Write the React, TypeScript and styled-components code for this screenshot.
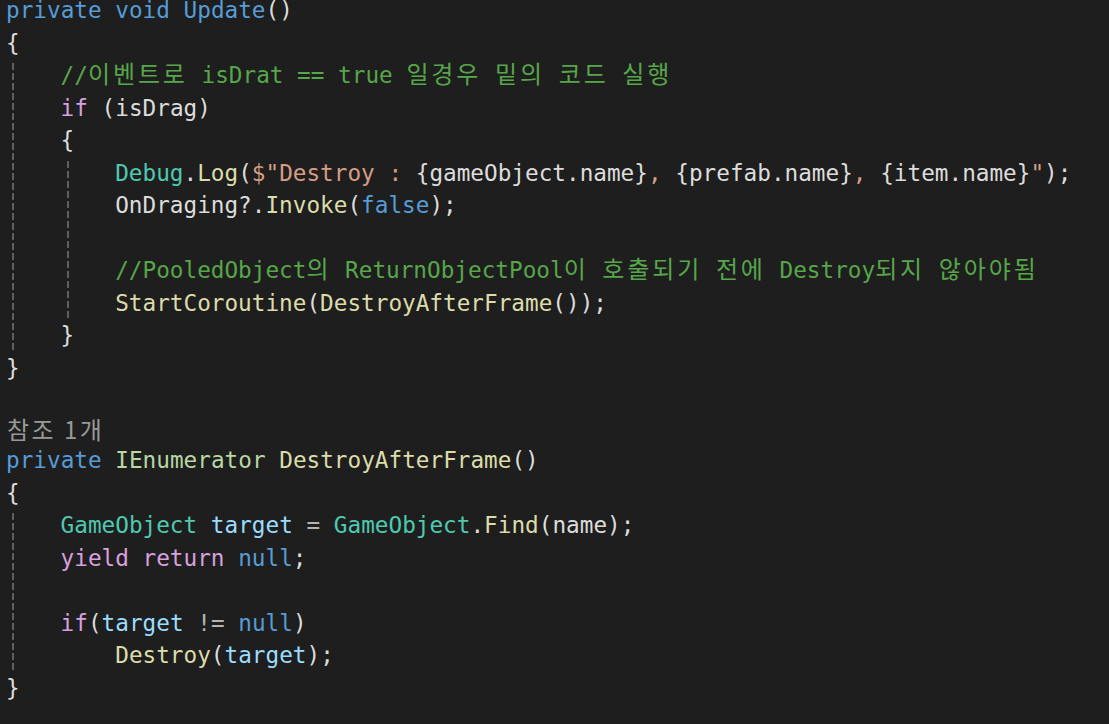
import React from "react";
import styled, { createGlobalStyle } from "styled-components";

const Global = createGlobalStyle`
  html, body { margin: 0; padding: 0; background: #1e1e1e; }
  #root { min-height: 100vh; }
`;

const COLORS = {
  kw: "#569cd6",
  ctl: "#d8a0df",
  cm: "#57a64a",
  ty: "#4ec9b0",
  fn: "#dcdcaa",
  str: "#d69d85",
  tx: "#dcdcdc",
  loc: "#9cdcfe",
  itf: "#b8d7a3",
  op: "#b4b4b4",
} as const;

type Kind = keyof typeof COLORS;

const Editor = styled.div`
  background: #1e1e1e;
  height: 724px;
  overflow: hidden;
  padding-left: 6px;
  box-sizing: border-box;
`;

const Code = styled.div`
  margin-top: -6px;
  font-family: "DejaVu Sans Mono", "Noto Sans CJK KR", monospace;
  font-size: 22.7px;
  color: #dcdcdc;
`;

const Line = styled.div`
  height: 32.55px;
  line-height: 32.55px;
  white-space: pre;
`;

const Block = styled.div`
  padding-left: 54.6px;
  background-image: repeating-linear-gradient(
    to bottom,
    #5e5e5e 0 7px,
    transparent 7px 10px
  );
  background-repeat: no-repeat;
  background-size: 2px calc(100% - 4px);
  background-position: 6px 4px;
`;

const Tok = styled.span<{ $k: Kind }>`
  color: ${(p) => COLORS[p.$k]};
`;

const Han = styled.span`
  font-family: "Noto Sans CJK KR", sans-serif;
  font-size: 24px;
  letter-spacing: 2.9px;
  line-height: 1;
`;

const Lens = styled.div`
  height: 27px;
  display: flex;
  align-items: center;
  font-family: "Noto Sans CJK KR", sans-serif;
  font-size: 24px;
  letter-spacing: 2.5px;
  color: #999999;
  padding-left: 1px;
  margin-top: -2px;
  margin-bottom: 2px;
`;

const HAN_RE = /([\uAC00-\uD7A3\u3131-\u318E]+)/;

function T({ k, s }: { k: Kind; s: string }) {
  const parts = s.split(HAN_RE);
  return (
    <Tok $k={k}>
      {parts.map((p, i) =>
        p && HAN_RE.test(p) ? <Han key={i}>{p}</Han> : p
      )}
    </Tok>
  );
}

export default function App() {
  return (
    <>
      <Global />
      <Editor>
        <Code>
          <Line>
            <T k="kw" s="private void Update" />
            <T k="tx" s="()" />
          </Line>
          <Line>{"{"}</Line>
          <Block>
            <Line>
              <T k="cm" s="//이벤트로 isDrat == true 일경우 밑의 코드 실행" />
            </Line>
            <Line>
              <T k="ctl" s="if" />
              <T k="tx" s=" (isDrag)" />
            </Line>
            <Line>{"{"}</Line>
            <Block>
              <Line>
                <T k="ty" s="Debug" />
                <T k="tx" s="." />
                <T k="fn" s="Log" />
                <T k="tx" s="(" />
                <T k="str" s={'$"Destroy : '} />
                <T k="tx" s="{gameObject.name}" />
                <T k="str" s=", " />
                <T k="tx" s="{prefab.name}" />
                <T k="str" s=", " />
                <T k="tx" s="{item.name}" />
                <T k="str" s={'"'} />
                <T k="tx" s=");" />
              </Line>
              <Line>
                <T k="tx" s="OnDraging?." />
                <T k="fn" s="Invoke" />
                <T k="tx" s="(" />
                <T k="kw" s="false" />
                <T k="tx" s=");" />
              </Line>
              <Line> </Line>
              <Line>
                <T
                  k="cm"
                  s="//PooledObject의 ReturnObjectPool이 호출되기 전에 Destroy되지 않아야됨"
                />
              </Line>
              <Line>
                <T k="fn" s="StartCoroutine" />
                <T k="tx" s="(" />
                <T k="fn" s="DestroyAfterFrame" />
                <T k="tx" s="());" />
              </Line>
            </Block>
            <Line>{"}"}</Line>
          </Block>
          <Line>{"}"}</Line>
          <Line> </Line>
          <Lens>참조 1개</Lens>
          <Line>
            <T k="kw" s="private" />
            <T k="tx" s=" " />
            <T k="itf" s="IEnumerator" />
            <T k="tx" s=" " />
            <T k="fn" s="DestroyAfterFrame" />
            <T k="tx" s="()" />
          </Line>
          <Line>{"{"}</Line>
          <Block>
            <Line>
              <T k="ty" s="GameObject" />
              <T k="tx" s=" " />
              <T k="loc" s="target" />
              <T k="tx" s=" " />
              <T k="op" s="=" />
              <T k="tx" s=" " />
              <T k="ty" s="GameObject" />
              <T k="tx" s="." />
              <T k="fn" s="Find" />
              <T k="tx" s="(name);" />
            </Line>
            <Line>
              <T k="ctl" s="yield return" />
              <T k="tx" s=" " />
              <T k="kw" s="null" />
              <T k="tx" s=";" />
            </Line>
            <Line> </Line>
            <Line>
              <T k="ctl" s="if" />
              <T k="tx" s="(" />
              <T k="loc" s="target" />
              <T k="tx" s=" " />
              <T k="op" s="!=" />
              <T k="tx" s=" " />
              <T k="kw" s="null" />
              <T k="tx" s=")" />
            </Line>
            <Line>
              <T k="tx" s="    " />
              <T k="fn" s="Destroy" />
              <T k="tx" s="(" />
              <T k="loc" s="target" />
              <T k="tx" s=");" />
            </Line>
          </Block>
          <Line>{"}"}</Line>
        </Code>
      </Editor>
    </>
  );
}
